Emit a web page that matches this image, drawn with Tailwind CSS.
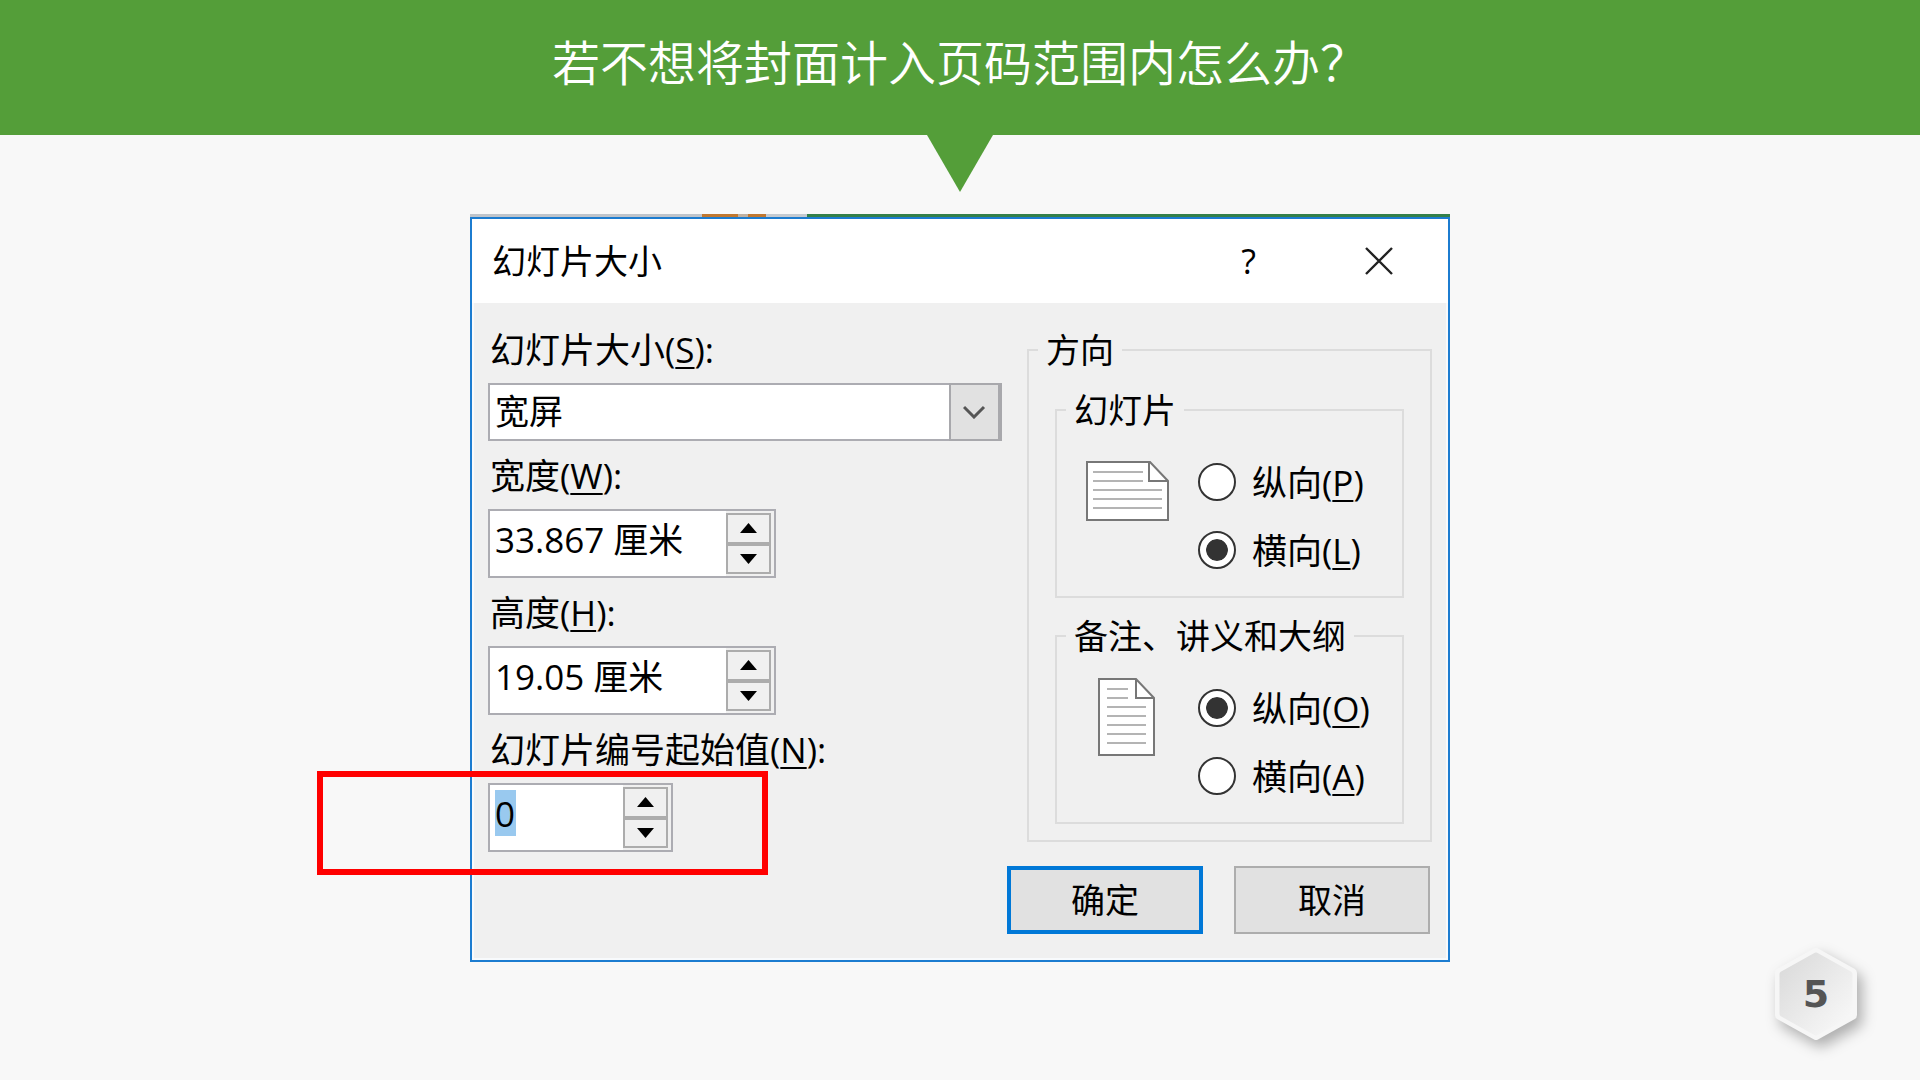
<!DOCTYPE html>
<html lang="zh-CN">
	<head>
		<meta charset="UTF-8" />
		<meta name="viewport" content="width=device-width, initial-scale=1.0" />
		<script src="https://cdn.jsdelivr.net/npm/@tailwindcss/browser@4"></script>
		<title>若不想将封面计入页码范围内怎么办？</title>
	</head>
	<body class="relative min-h-screen bg-[#f8f8f8] font-['Open_Sans','Noto_Sans_CJK_SC',sans-serif] text-black">
		<!-- HEADER -->
		<header class="flex h-[135px] items-center justify-center bg-[#549e39] pb-4">
			<h1 class="font-['Noto_Sans_CJK_SC',sans-serif] text-5xl font-[350] text-white">若不想将封面计入页码范围内怎么办？</h1>
		</header>
		<svg class="mx-auto block h-[57px] w-[66px]" viewBox="0 0 66 57">
			<path d="M0 0H66L33 57Z" fill="#549e39" />
		</svg>

		<!-- DIALOG -->
		<main class="relative mx-auto mt-[22px] w-[980px]">
			<div class="flex h-[3px]">
				<div class="w-[232px] bg-[#bfc4ca]"></div>
				<div class="w-[36px] bg-[#c07830]"></div>
				<div class="w-[10px] bg-[#bfb0a0]"></div>
				<div class="w-[18px] bg-[#c07830]"></div>
				<div class="w-[41px] bg-[#c4cad0]"></div>
				<div class="grow bg-[#33804a]"></div>
			</div>

			<form class="border-2 border-[#1c7cd0] bg-[#f0f0f0] text-[34px]" onsubmit="return false">
				<div class="flex h-[84px] items-center bg-white pl-5 pr-[55px]">
					<h2 class="grow">幻灯片大小</h2>
					<button type="button" class="mr-[109px] font-medium" aria-label="帮助">?</button>
					<button type="button" aria-label="关闭">
						<svg class="h-[28px] w-[28px]" viewBox="0 0 28 28" fill="none" stroke="#222" stroke-width="2.4">
							<path d="M1 1L27 27M27 1L1 27" />
						</svg>
					</button>
				</div>

				<div class="flex justify-between border-2 border-t-0 border-[#f8fafc] px-[14px]">
					<!-- Left column -->
					<div class="w-[514px] pt-3">
						<label for="taille" class="flex h-[68px] items-center pl-[2px] pt-[2px] text-[35px]">幻灯片大小(<u class="decoration-2 underline-offset-4">S</u>):</label>
						<div class="relative h-[58px]">
							<select id="taille" class="h-full w-full appearance-none border-2 border-[#acacb2] bg-white pb-[2px] pl-[5px] leading-[50px]">
								<option>宽屏</option>
							</select>
							<div class="pointer-events-none absolute right-0 top-0 flex h-full w-[53px] items-center justify-center border-2 border-r-4 border-[#a8a8ac] bg-[#e1e1e1]">
								<svg class="h-[14px] w-[23px]" viewBox="0 0 23 14" fill="none" stroke="#555" stroke-width="3">
									<path d="M1 2L11 12L21 2" />
								</svg>
							</div>
						</div>

						<label for="largeur" class="flex h-[68px] items-center pl-[2px] pt-[2px] text-[35px]">宽度(<u class="decoration-2 underline-offset-4">W</u>):</label>
						<div class="flex h-[69px] w-[288px] border-2 border-[#acacb2] bg-white">
							<input id="largeur" type="text" value="33.867 厘米" class="min-w-0 grow pb-[6px] pl-[5px] text-[35px] outline-none" />
							<div class="flex w-[48px] shrink-0 flex-col bg-[#f0f0f0] py-[2px] pr-[3px]">
								<button type="button" aria-label="增加" class="flex grow items-center justify-center border-2 border-[#acacac]">
									<svg class="h-[10px] w-[17px]" viewBox="0 0 17 10"><path d="M0 10L8.500 0L17 10Z" /></svg>
								</button>
								<button type="button" aria-label="减少" class="flex grow items-center justify-center border-2 border-[#acacac]">
									<svg class="h-[10px] w-[17px]" viewBox="0 0 17 10"><path d="M0 0H17L8.500 10Z" /></svg>
								</button>
							</div>
						</div>

						<label for="hauteur" class="flex h-[68px] items-center pl-[2px] pt-[2px] text-[35px]">高度(<u class="decoration-2 underline-offset-4">H</u>):</label>
						<div class="flex h-[69px] w-[288px] border-2 border-[#acacb2] bg-white">
							<input id="hauteur" type="text" value="19.05 厘米" class="min-w-0 grow pb-[6px] pl-[5px] text-[35px] outline-none" />
							<div class="flex w-[48px] shrink-0 flex-col bg-[#f0f0f0] py-[2px] pr-[3px]">
								<button type="button" aria-label="增加" class="flex grow items-center justify-center border-2 border-[#acacac]">
									<svg class="h-[10px] w-[17px]" viewBox="0 0 17 10"><path d="M0 10L8.500 0L17 10Z" /></svg>
								</button>
								<button type="button" aria-label="减少" class="flex grow items-center justify-center border-2 border-[#acacac]">
									<svg class="h-[10px] w-[17px]" viewBox="0 0 17 10"><path d="M0 0H17L8.500 10Z" /></svg>
								</button>
							</div>
						</div>

						<label for="debut" class="flex h-[68px] items-center pl-[2px] pt-[2px] text-[35px]">幻灯片编号起始值(<u class="decoration-2 underline-offset-4">N</u>):</label>
						<div class="relative flex h-[69px] w-[185px] border-2 border-[#acacb2] bg-white">
							<!-- selected value -->
							<div class="absolute left-[5px] top-[5px] h-[46px] w-[21px] bg-[#99c9ef]"></div>
							<input id="debut" type="text" value="0" class="relative min-w-0 grow bg-transparent pb-[6px] pl-[5px] text-[35px] outline-none" />
							<div class="flex w-[48px] shrink-0 flex-col bg-[#f0f0f0] py-[2px] pr-[3px]">
								<button type="button" aria-label="增加" class="flex grow items-center justify-center border-2 border-[#acacac]">
									<svg class="h-[10px] w-[17px]" viewBox="0 0 17 10"><path d="M0 10L8.500 0L17 10Z" /></svg>
								</button>
								<button type="button" aria-label="减少" class="flex grow items-center justify-center border-2 border-[#acacac]">
									<svg class="h-[10px] w-[17px]" viewBox="0 0 17 10"><path d="M0 0H17L8.500 10Z" /></svg>
								</button>
							</div>
						</div>
					</div>

					<!-- Right column -->
					<div class="w-[405px] pb-6 pt-[27px]">
						<fieldset class="h-[512px] border-2 border-[#dcdcdc] px-[26px]">
							<legend class="-ml-[17px] px-2 leading-[40px]">方向</legend>

							<fieldset class="mt-5 h-[208px] border-2 border-[#dcdcdc]">
								<legend class="ml-[9px] px-2 leading-[40px]">幻灯片</legend>
								<div class="flex pl-[29px]">
									<svg class="mr-[29px] mt-[31px] h-[60px] w-[83px]" viewBox="0 0 83 60" fill="none">
										<path d="M1 1H64L82 20V59H1Z" fill="#fff" stroke="#777" stroke-width="2" />
										<path d="M63 1V20H82" stroke="#777" stroke-width="2" />
										<path d="M7 11H57M7 20H57M7 29H76M7 38H76M7 47H76" stroke="#b4b4b4" stroke-width="2" />
									</svg>
									<div class="flex flex-col pt-[18px] text-[35px]">
										<label class="flex h-[68px] items-center gap-4">
											<input type="radio" name="diapo" class="h-[38px] w-[38px] appearance-none rounded-full border-2 border-[#333] bg-white p-[6px] checked:bg-[#333] checked:bg-clip-content" />
											<span class="pt-[2px]">纵向(<u class="decoration-2 underline-offset-4">P</u>)</span>
										</label>
										<label class="flex h-[68px] items-center gap-4">
											<input type="radio" name="diapo" checked class="h-[38px] w-[38px] appearance-none rounded-full border-2 border-[#333] bg-white p-[6px] checked:bg-[#333] checked:bg-clip-content checked:shadow-[inset_0_0_0_6px_white]" />
											<span class="pt-[2px]">横向(<u class="decoration-2 underline-offset-4">L</u>)</span>
										</label>
									</div>
								</div>
							</fieldset>

							<fieldset class="mt-[18px] h-[208px] border-2 border-[#dcdcdc]">
								<legend class="ml-[9px] px-2 leading-[40px]">备注、讲义和大纲</legend>
								<div class="flex pl-[41px]">
									<svg class="mr-[43px] mt-[22px] h-[78px] w-[57px]" viewBox="0 0 57 78" fill="none">
										<path d="M1 1H38L56 20V77H1Z" fill="#fff" stroke="#777" stroke-width="2" />
										<path d="M38 1V20H56" stroke="#777" stroke-width="2" />
										<path d="M9 11H30M9 20H30M9 29H48M9 38H48M9 47H48M9 56H48M9 65H48" stroke="#b4b4b4" stroke-width="2" />
									</svg>
									<div class="flex flex-col pt-[18px] text-[35px]">
										<label class="flex h-[68px] items-center gap-4">
											<input type="radio" name="notes" checked class="h-[38px] w-[38px] appearance-none rounded-full border-2 border-[#333] bg-white p-[6px] checked:bg-[#333] checked:bg-clip-content checked:shadow-[inset_0_0_0_6px_white]" />
											<span class="pt-[2px]">纵向(<u class="decoration-2 underline-offset-4">O</u>)</span>
										</label>
										<label class="flex h-[68px] items-center gap-4">
											<input type="radio" name="notes" class="h-[38px] w-[38px] appearance-none rounded-full border-2 border-[#333] bg-white p-[6px] checked:bg-[#333] checked:bg-clip-content" />
											<span class="pt-[2px]">横向(<u class="decoration-2 underline-offset-4">A</u>)</span>
										</label>
									</div>
								</div>
							</fieldset>
						</fieldset>

						<div class="-ml-5 mt-6 flex justify-between pr-[2px]">
							<button type="submit" class="h-[68px] w-[196px] border-4 border-[#0078d7] bg-[#e1e1e1]">确定</button>
							<button type="button" class="h-[68px] w-[196px] border-2 border-[#adadad] bg-[#e1e1e1]">取消</button>
						</div>
					</div>
				</div>
			</form>

			<!-- Red frame round the start number -->
			<div class="pointer-events-none absolute -left-[153px] top-[557px] h-[104px] w-[451px] border-[6px] border-[#ff0000]"></div>
		</main>

		<!-- Page number -->
		<div class="absolute bottom-9 right-[57px] flex h-[100px] w-[94px] items-center justify-center">
			<svg class="absolute inset-0 overflow-visible drop-shadow-[5px_7px_7px_rgba(0,0,0,0.3)]" viewBox="0 0 94 100">
				<defs>
					<linearGradient id="hex" x1="0" y1="0" x2="1" y2="1">
						<stop offset="0" stop-color="#d9d9d9" />
						<stop offset="1" stop-color="#fafafa" />
					</linearGradient>
				</defs>
				<path d="M47 9L83 29V71L47 91L11 71V29Z" fill="#f6f6f6" stroke="#f6f6f6" stroke-width="10" stroke-linejoin="round" />
				<path d="M47 11L81 30V70L47 89L13 70V30Z" fill="url(#hex)" stroke="url(#hex)" stroke-width="5" stroke-linejoin="round" />
			</svg>
			<span class="relative font-['DejaVu_Sans',sans-serif] text-[38px] font-bold text-[#555]">5</span>
		</div>
	</body>
</html>
